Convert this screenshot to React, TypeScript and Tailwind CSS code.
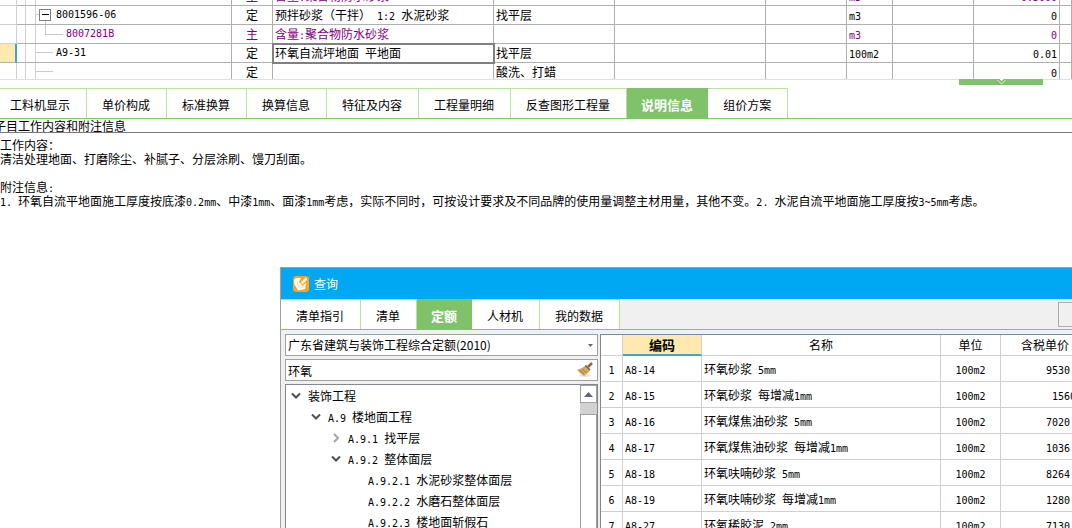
import React from "react";
import clsx from "clsx";

interface BudgetRow {
  code: string;
  type: string;
  name: string;
  spec?: string;
  unit?: string;
  qty: string;
  kind: "group" | "child" | "leaf";
  selected?: boolean;
}

interface QuotaRow {
  code: string;
  name: string;
  price: string;
  offset?: boolean;
}

const budgetRows: BudgetRow[] = [
  { code: "8007266B", type: "主", name: "含量:聚合物防水砂浆", unit: "m3", qty: "0.5000", kind: "child" },
  { code: "8001596-06", type: "定", name: "预拌砂浆（干拌） 1:2 水泥砂浆", spec: "找平层", unit: "m3", qty: "0", kind: "group" },
  { code: "8007281B", type: "主", name: "含量:聚合物防水砂浆", unit: "m3", qty: "0", kind: "child" },
  { code: "A9-31", type: "定", name: "环氧自流坪地面 平地面", spec: "找平层", unit: "100m2", qty: "0.01", kind: "leaf", selected: true },
  { code: "", type: "定", name: "", spec: "酸洗、打蜡", qty: "0", kind: "leaf" },
];

const detailTabs = ["工料机显示", "单价构成", "标准换算", "换算信息", "特征及内容", "工程量明细", "反查图形工程量", "说明信息", "组价方案"];
const queryTabs = ["清单指引", "清单", "定额", "人材机", "我的数据"];

const tree = [
  { level: 0, label: "装饰工程", state: "open" },
  { level: 1, label: "A.9 楼地面工程", state: "open" },
  { level: 2, label: "A.9.1 找平层", state: "closed" },
  { level: 2, label: "A.9.2 整体面层", state: "open" },
  { level: 3, label: "A.9.2.1 水泥砂浆整体面层", state: "none" },
  { level: 3, label: "A.9.2.2 水磨石整体面层", state: "none" },
  { level: 3, label: "A.9.2.3 楼地面斩假石", state: "none" },
];

const treeIndent = ["pl-[5px]", "pl-[25px]", "pl-[45px]", "pl-[65px]"];

const quotaRows: QuotaRow[] = [
  { code: "A8-14", name: "环氧砂浆 5mm", price: "9530" },
  { code: "A8-15", name: "环氧砂浆 每增减1mm", price: "1560", offset: true },
  { code: "A8-16", name: "环氧煤焦油砂浆 5mm", price: "7020" },
  { code: "A8-17", name: "环氧煤焦油砂浆 每增减1mm", price: "1036" },
  { code: "A8-18", name: "环氧呋喃砂浆 5mm", price: "8264" },
  { code: "A8-19", name: "环氧呋喃砂浆 每增减1mm", price: "1280" },
  { code: "A8-27", name: "环氧稀胶泥 2mm", price: "7130" },
];

// Latin runs are set in a half-width face so that two letters take one CJK cell
const Txt: React.FC<{ children: string }> = ({ children }) => (
  <>
    {children.split(/([\x20-\x7e]+)/).map((part, i) =>
      i % 2 ? (
        <span key={i} className="font-['DejaVu_Sans_Mono',monospace] text-[10px] leading-none whitespace-pre">{part}</span>
      ) : (
        part
      )
    )}
  </>
);

const Tabs: React.FC<{ items: string[]; active: string; label: string; className?: string }> = ({ items, active, label, className }) => (
  <div role="tablist" aria-label={label} className={clsx("flex h-[31px] border-b border-[#7dc66a]", className)}>
    {items.map((item) => (
      <button
        key={item}
        role="tab"
        aria-selected={item === active}
        className={clsx(
          "flex shrink-0 items-center whitespace-nowrap border-t border-r pt-[3px]",
          item === active
            ? "border-[#80c269] bg-[#80c269] px-[14px] text-[13px] font-bold text-white"
            : "border-[#b3e69c] bg-white pr-4 pl-[15px]"
        )}
      >
        {item}
      </button>
    ))}
  </div>
);

// Guide lines and expand box in front of each code
const TreeCode: React.FC<{ row: BudgetRow }> = ({ row }) => (
  <div className="flex h-[18px] items-center">
    <span className="h-[18px] w-[9px] shrink-0 border-r border-[#d0d0d0]" />
    <span className="h-[18px] w-[10px] shrink-0 border-r border-[#d0d0d0]" />
    <svg className="mr-[3px] h-[18px] w-[27px] shrink-0" viewBox="0 0 27 18" fill="none" shapeRendering="crispEdges">
      {row.kind === "child" && <path d="M9.5 0V9.5H27" stroke="#c8c8c8" />}
      {row.kind === "leaf" && <path d="M0 8.5H17" stroke="#c8c8c8" />}
      {row.kind === "group" && (
        <>
          <path d="M0 8.5H4M9.5 15V18" stroke="#c8c8c8" />
          <path d="M3.5 3.5H14.5V14.5H3.5Z" stroke="#808080" />
          <path d="M6 8.5H13" stroke="#000" />
        </>
      )}
    </svg>
    <span className={clsx("flex items-center", row.kind !== "child" && "-ml-[10px]")}>
      <Txt>{row.code}</Txt>
    </span>
  </div>
);

const BudgetTable: React.FC = () => (
  <div className="h-20 overflow-hidden border-b border-[#e0e0e0]">
    <table className="-mt-[13px] w-full table-fixed border-separate border-spacing-0 leading-[18px] [&_td]:h-[19px] [&_td]:border-r [&_td]:border-b [&_td]:border-[#b0b0b0] [&_td]:p-0 [&_td]:whitespace-nowrap">
      <colgroup>
        <col className="w-[17px]" />
        <col className="w-[215px]" />
        <col className="w-[41px]" />
        <col className="w-[221px]" />
        <col className="w-[121px]" />
        <col className="w-[151px]" />
        <col className="w-[81px]" />
        <col className="w-[46px]" />
        <col className="w-[81px]" />
        <col className="w-[86px]" />
        <col />
      </colgroup>
      <tbody>
        {budgetRows.map((row, i) => (
          <tr key={i} className={clsx(row.kind === "child" ? "text-[#800080]" : "text-black")}>
            <td className={clsx(row.selected ? "border-r-2! border-r-[#3aa6d8]! bg-[#ffe9af]" : "border-[#d0d0d0]!")} />
            <td><TreeCode row={row} /></td>
            <td className="text-center">{row.type}</td>
            <td className={clsx(row.selected && "outline-2 -outline-offset-1 outline-[#808080]")}>
              <div className="h-[18px] pl-[2px]"><Txt>{row.name}</Txt></div>
            </td>
            <td><div className="h-[18px] pl-[2px]">{row.spec}</div></td>
            <td />
            <td />
            <td><div className="h-[18px] pl-[2px]"><Txt>{row.unit ?? ""}</Txt></div></td>
            <td />
            <td className="text-right"><div className="h-[18px] pr-[2px]"><Txt>{row.qty}</Txt></div></td>
            <td />
          </tr>
        ))}
      </tbody>
    </table>
  </div>
);

const Notes: React.FC = () => (
  <section>
    <h2 className="-ml-[6px] h-[14px] border-b border-[#7a7a7a] leading-[14px] whitespace-nowrap">子目工作内容和附注信息</h2>
    <div className="pt-[5px] leading-[14px] whitespace-nowrap">
      <p>工作内容：</p>
      <p>清洁处理地面、打磨除尘、补腻子、分层涂刷、馒刀刮面。</p>
      <p className="pt-[14px]"><Txt>附注信息:</Txt></p>
      <p>
        <Txt>1. 环氧自流平地面施工厚度按底漆0.2mm、中漆1mm、面漆1mm考虑，实际不同时，可按设计要求及不同品牌的使用量调整主材用量，其他不变。2. 水泥自流平地面施工厚度按3~5mm考虑。</Txt>
      </p>
    </div>
  </section>
);

const QuotaTree: React.FC = () => (
  <div className="flex min-h-0 flex-1 border border-b-0 border-[#828790] bg-white">
    <ul className="flex-1 overflow-hidden">
      {tree.map((node) => (
        <li key={node.label} className={clsx("flex h-[21px] items-center whitespace-nowrap", treeIndent[node.level])}>
          <svg className="mr-[7px] h-[10px] w-[10px] shrink-0" viewBox="0 0 10 10" fill="none" strokeWidth="2">
            {node.state === "open" && <path d="M1 2.5L5 6.5L9 2.5" stroke="#505050" />}
            {node.state === "closed" && <path d="M3 1L7 5L3 9" stroke="#a6a6a6" />}
          </svg>
          <span><Txt>{node.label}</Txt></span>
        </li>
      ))}
    </ul>
    <div className="flex w-[17px] flex-col">
      <button aria-label="向上滚动" className="flex h-[18px] shrink-0 items-center justify-center border border-[#a0a0a0] bg-white">
        <svg width="9" height="5" viewBox="0 0 9 5"><path d="M4.5 0L9 5H0Z" fill="#606676" /></svg>
      </button>
      <div className="h-[11px] shrink-0 bg-[#d2d2d2]" />
      <div className="flex-1 border border-b-0 border-[#a0a0a0] bg-white" />
    </div>
  </div>
);

const QuotaTable: React.FC = () => (
  <div className="min-w-0 flex-1 overflow-hidden border-t border-l border-[#828790] bg-white">
    <table className="w-[calc(100%+18px)] table-fixed border-separate border-spacing-0 [&_td]:h-[26px] [&_td]:border-r [&_td]:border-b [&_td]:border-[#d0d0d0] [&_td]:p-0 [&_td]:whitespace-nowrap [&_th]:h-[21px] [&_th]:border-r [&_th]:border-b [&_th]:border-[#d0d0d0] [&_th]:p-0">
      <colgroup>
        <col className="w-[22px]" />
        <col className="w-[79px]" />
        <col />
        <col className="w-[60px]" />
        <col className="w-[89px]" />
      </colgroup>
      <thead className="leading-[18px]">
        <tr>
          <th />
          <th className="border-b-2! border-b-[#3aa6d8]! bg-[#ffe9af] text-[13px] font-bold">编码</th>
          <th className="font-normal">名称</th>
          <th className="font-normal">单位</th>
          <th className="font-normal">含税单价</th>
        </tr>
      </thead>
      <tbody>
        {quotaRows.map((row, i) => (
          <tr key={row.code}>
            <td className="text-center"><Txt>{String(i + 1)}</Txt></td>
            <td><div className="pl-[2px]"><Txt>{row.code}</Txt></div></td>
            <td><div className="pl-[2px]"><Txt>{row.name}</Txt></div></td>
            <td className="text-center"><Txt>100m2</Txt></td>
            <td><div className={clsx(row.offset ? "pl-[51px]" : "pl-[45px]")}><Txt>{row.price}</Txt></div></td>
          </tr>
        ))}
      </tbody>
    </table>
  </div>
);

const QueryWindow: React.FC = () => (
  <div role="dialog" aria-label="查询" className="absolute top-[267px] right-0 bottom-0 left-[280px] flex flex-col border-t border-l border-[#a0a0a0] bg-[#f0f0f0]">
    <header className="flex h-[31px] shrink-0 items-center gap-[5px] bg-[#00a8f3] pl-3 text-white">
      <svg width="16" height="16" viewBox="0 0 16 16" fill="none">
        <rect width="16" height="16" rx="3" fill="#ffa31a" />
        <path d="M1 4L3 2L8 2L6 6L9 10L13 7L12 13L5 14.5L3 11L1.5 9Z" fill="#fff" />
        <path d="M4 5L5.5 11L11 11" stroke="#ffd9a0" />
        <path d="M7 9L13.5 2.5" stroke="#fff" strokeWidth="2.5" />
        <path d="M7 6L10 9.5" stroke="#f79a18" />
      </svg>
      <h1>查询</h1>
    </header>
    <div className="flex shrink-0">
      <Tabs items={queryTabs} active="定额" label="查询类别" className="flex-1" />
      <div className="flex h-[31px] w-[14px] items-center border-b border-[#7dc66a]">
        <button aria-label="更多" className="h-[25px] w-full border border-r-0 border-[#adadad]" />
      </div>
    </div>
    <div className="flex min-h-0 flex-1 gap-[2px] pt-1 pl-1">
      <div className="flex w-[313px] shrink-0 flex-col">
        <label className="relative mb-[3px] block">
          <select aria-label="定额库" className="block h-[22px] w-full appearance-none border border-[#a0a0a0] bg-white px-[2px] outline-none">
            <option>广东省建筑与装饰工程综合定额(2010)</option>
          </select>
          <svg className="pointer-events-none absolute top-[10px] right-[5px]" width="5" height="3" viewBox="0 0 5 3"><path d="M0 0H5L2.5 3Z" fill="#606676" /></svg>
        </label>
        <div className="mb-[3px] flex h-[22px] items-center border border-[#a0a0a0] bg-white pr-1">
          <input aria-label="查询条件" defaultValue="环氧" className="h-5 min-w-0 flex-1 pl-[2px] outline-none" />
          <button aria-label="清除">
            <svg width="16" height="16" viewBox="0 0 16 16" fill="none">
              <ellipse cx="8" cy="13.5" rx="6" ry="1.5" fill="#e6e2dc" />
              <path d="M11 5L15 1" stroke="#a85b32" strokeWidth="2.5" />
              <path d="M9 3L13 8L12 10L7 14L4 12L0 8L5 6Z" fill="#d3aa62" />
              <path d="M2 8L7 12M5 6.5L9.5 11" stroke="#a67c3a" />
              <path d="M8.5 3.5L13 8" stroke="#64625f" strokeWidth="1.5" />
            </svg>
          </button>
        </div>
        <QuotaTree />
      </div>
      <QuotaTable />
    </div>
  </div>
);

const App: React.FC = () => (
  <div className="relative h-screen overflow-hidden bg-white font-['Noto_Sans_CJK_SC',sans-serif] text-[12px] leading-[18px] text-black">
    <div className="relative mb-2">
      <BudgetTable />
      <button aria-label="收起" className="absolute top-[79px] right-[29px] flex h-[6px] w-[84px] justify-center bg-[#80c269]">
        <svg width="9" height="6" viewBox="0 0 9 6" fill="none">
          <path d="M2.5 0H6.5L4.5 2Z" fill="#fff" />
          <path d="M0.5 1L4.5 5L8.5 1" stroke="#d5efcb" />
        </svg>
      </button>
    </div>
    <Tabs items={detailTabs} active="说明信息" label="明细" className="-ml-[5px]" />
    <Notes />
    <QueryWindow />
  </div>
);

export default App;
